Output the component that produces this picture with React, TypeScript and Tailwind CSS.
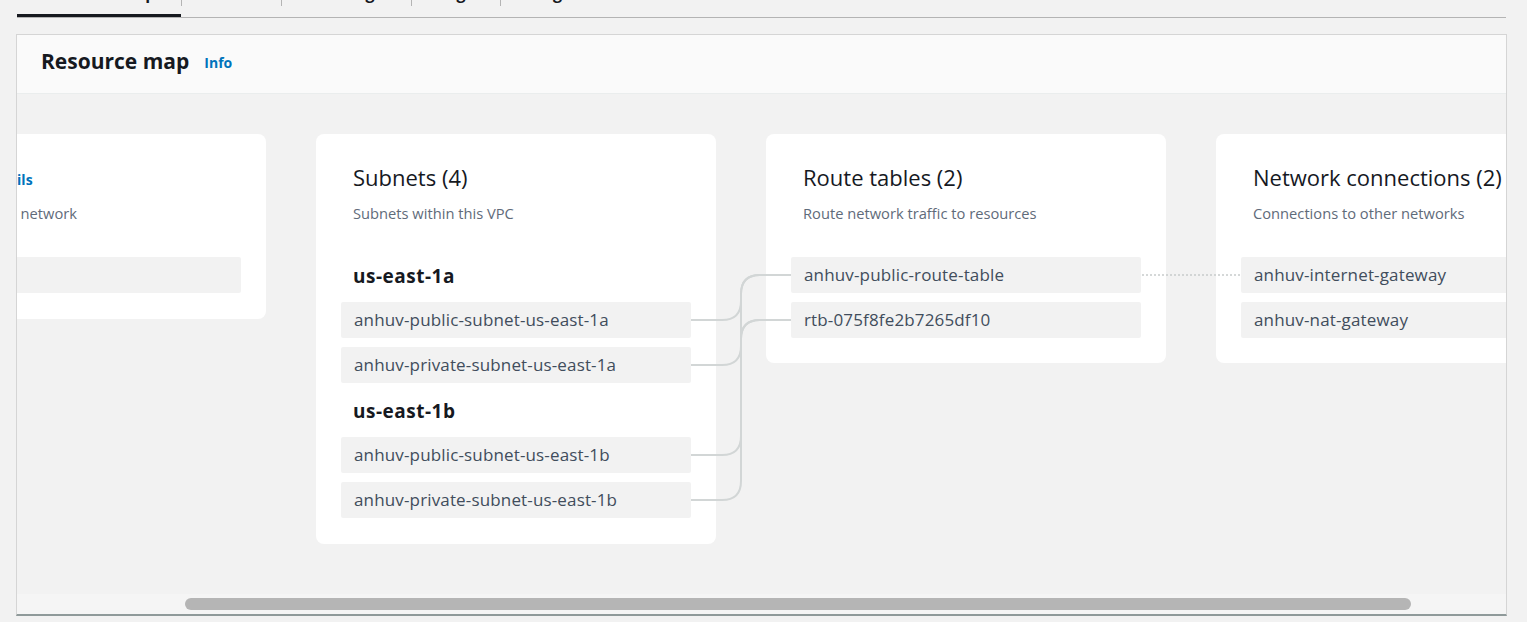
import React from "react";

const font = { fontFamily: '"Open Sans", "Noto Sans", Arial, sans-serif' };

function Item({ text }: { text: string }) {
  return (
    <div className="h-[36px] bg-[#f2f2f2] rounded-[2px] flex items-center pl-[13px] text-[17px] tracking-[0.15px] text-[#414d5c] whitespace-nowrap overflow-hidden">
      {text}
    </div>
  );
}

function CardHead({ title, sub, link }: { title: string; sub: string; link?: string }) {
  return (
    <div className="pl-[12px]">
      <div className="flex items-center gap-[1px] h-[28px]">
        <span className="text-[22px] leading-[28px] text-[#16191f] whitespace-nowrap">{title}</span>
        {link && <span className="text-[14px] mt-[4px] font-bold text-[#0073bb] whitespace-nowrap">{link}</span>}
      </div>
      <div className="mt-[12px] text-[14.7px] leading-[20px] text-[#5f6b7a] whitespace-nowrap">{sub}</div>
    </div>
  );
}

function Zone({ text }: { text: string }) {
  return (
    <div className="pl-[12px] text-[19px] font-bold tracking-[0.5px] leading-[24px] text-[#16191f]">{text}</div>
  );
}

export default function App() {
  const tabs = [
    { label: "Resource map", w: "w-[164px]", active: true },
    { label: "CIDRs", w: "w-[100px]" },
    { label: "Flow logs", w: "w-[130px]" },
    { label: "Tags", w: "w-[89px]" },
    { label: "Integrations", w: "w-[140px]" },
  ];
  return (
    <div className="w-[1527px] h-[622px] bg-[#f2f2f2] overflow-hidden" style={font}>
      {/* tabs strip */}
      <div className="ml-[17px] mr-[21px] -mt-[24px] h-[42px] border-b border-[#b4b4b4] flex">
        {tabs.map((t, i) => (
          <div
            key={t.label}
            className={`${t.w} relative flex justify-center pt-[7px] ${t.active ? "border-b-[3px] border-[#16191f]" : ""}`}
          >
            {i > 0 && <div className="absolute left-0 top-[10px] h-[20px] w-px bg-[#b4b4b4]" />}
            <span className="text-[16px] font-bold leading-[20px] text-[#16191f] whitespace-nowrap">{t.label}</span>
          </div>
        ))}
      </div>

      {/* container */}
      <div className="ml-[16px] mt-[16px] w-[1491px] border border-[#d5d5d5] border-b-[2px] border-b-[#8f9a9a] bg-[#f2f2f2]">
        <div className="h-[59px] bg-[#fafafa] border-b border-[#eaeded] flex items-center pl-[24px] pb-[6px]">
          <span className="text-[21px] font-bold text-[#16191f] leading-[26px]">Resource map</span>
          <span className="ml-[15px] text-[14px] font-bold text-[#0073bb] mt-[3px]">Info</span>
        </div>

        {/* canvas */}
        <div className="relative h-[500px] overflow-hidden">
          <div className="flex items-start gap-[50px] ml-[-151px] mt-[40px] w-[2000px]">
            {/* VPC card */}
            <div className="w-[400px] bg-white rounded-[8px] pt-[29px] px-[25px] pb-[26px]">
              <CardHead title="VPC" sub="Your AWS virtual network" link="Show details" />
              <div className="mt-[34px]">
                <Item text="anhuv-vpc" />
              </div>
            </div>
            {/* Subnets */}
            <div className="w-[400px] bg-white rounded-[8px] pt-[29px] px-[25px] pb-[26px]">
              <CardHead title="Subnets (4)" sub="Subnets within this VPC" />
              <div className="mt-[41px]">
                <Zone text="us-east-1a" />
              </div>
              <div className="mt-[14px] flex flex-col gap-[9px]">
                <Item text="anhuv-public-subnet-us-east-1a" />
                <Item text="anhuv-private-subnet-us-east-1a" />
              </div>
              <div className="mt-[16px]">
                <Zone text="us-east-1b" />
              </div>
              <div className="mt-[14px] flex flex-col gap-[9px]">
                <Item text="anhuv-public-subnet-us-east-1b" />
                <Item text="anhuv-private-subnet-us-east-1b" />
              </div>
            </div>
            {/* Route tables */}
            <div className="w-[400px] bg-white rounded-[8px] pt-[29px] px-[25px] pb-[25px]">
              <CardHead title="Route tables (2)" sub="Route network traffic to resources" />
              <div className="mt-[34px] flex flex-col gap-[9px]">
                <Item text="anhuv-public-route-table" />
                <Item text="rtb-075f8fe2b7265df10" />
              </div>
            </div>
            {/* Network connections */}
            <div className="w-[400px] bg-white rounded-[8px] pt-[29px] px-[25px] pb-[25px]">
              <CardHead title="Network connections (2)" sub="Connections to other networks" />
              <div className="mt-[34px] flex flex-col gap-[9px]">
                <Item text="anhuv-internet-gateway" />
                <Item text="anhuv-nat-gateway" />
              </div>
            </div>
          </div>

          {/* connectors */}
          <svg className="absolute left-0 top-0 pointer-events-none" width="1489" height="500">
            <g transform="translate(-17,-94)" fill="none" stroke="#d2d6d6" strokeWidth="2">
              <path d="M691 320 H722 Q741 320 741 301 V294 Q741 275 760 275 H791" />
              <path d="M691 365 H722 Q741 365 741 346 V339 Q741 320 760 320 H791" />
              <path d="M691 455 H722 Q741 455 741 436 V294 Q741 275 760 275 H791" />
              <path d="M691 500 H722 Q741 500 741 481 V339 Q741 320 760 320 H791" />
              <path d="M1142 275 H1241" stroke="#c8cccc" strokeWidth="1.5" strokeDasharray="2 2" />
            </g>
          </svg>
        </div>

        {/* scrollbar */}
        <div className="h-[20px] bg-[#f5f5f5] relative">
          <div className="absolute left-[168px] top-[4px] w-[1226px] h-[12px] rounded-full bg-[#b5b5b5]" />
        </div>
      </div>
    </div>
  );
}
